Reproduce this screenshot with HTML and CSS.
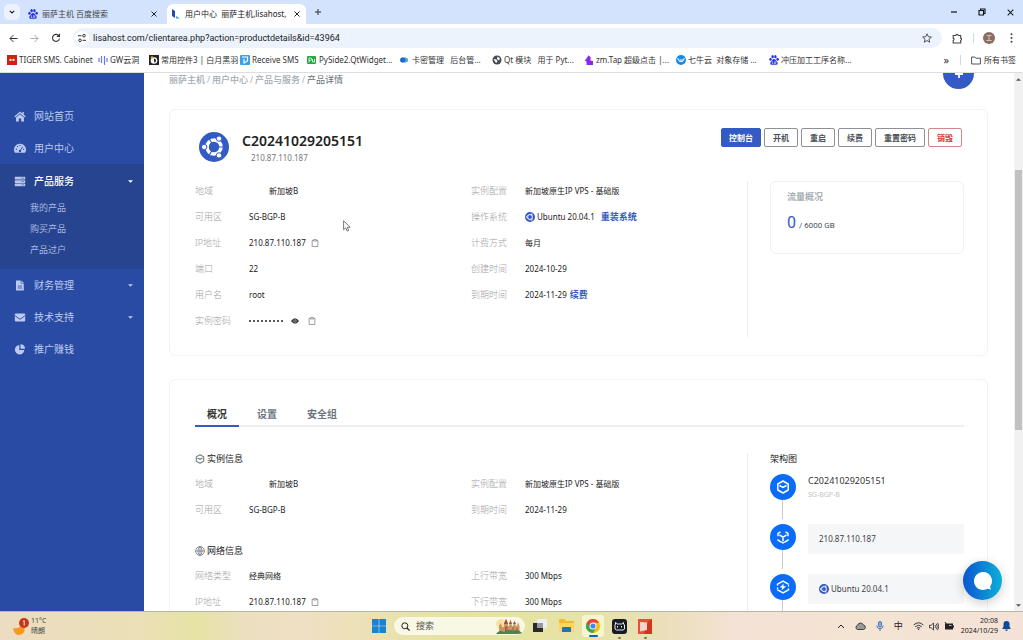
FILE: index.html
```html
<!DOCTYPE html>
<html lang="zh-CN">
<head>
<meta charset="utf-8">
<title>用户中心 - 丽萨主机</title>
<link rel="stylesheet" href="styles.css">
</head>
<body>
<svg class="defs" aria-hidden="true">
  <symbol id="ubuntu" viewBox="0 0 30 30"><circle cx="15" cy="15" r="15" fill="#335bc3"/><circle cx="15" cy="15" r="7" fill="none" stroke="#fff" stroke-width="3.600"/><g stroke="#335bc3" stroke-width="1.200"><path d="M15 15h10M15 15l-5.500-9.500M15 15l-5.500 9.500"/></g><circle cx="15" cy="15" r="5" fill="#335bc3"/><g fill="#fff" stroke="#335bc3" stroke-width="1"><circle cx="5.200" cy="15" r="2.700"/><circle cx="20" cy="6.600" r="2.700"/><circle cx="20" cy="23.400" r="2.700"/></g></symbol>
  <symbol id="copy" viewBox="0 0 8 9"><path d="M2.400 1.500H.8v7h6.400v-7H5.600M2.400.7h3.200v1.600H2.400z" fill="none" stroke="#777" stroke-width=".8"/></symbol>
  <symbol id="paw" viewBox="0 0 10 10"><g fill="#2932e1"><ellipse cx="1.500" cy="4.200" rx="1.200" ry="1.500"/><ellipse cx="3.600" cy="1.700" rx="1.200" ry="1.600"/><ellipse cx="6.400" cy="1.700" rx="1.200" ry="1.600"/><ellipse cx="8.600" cy="4.200" rx="1.200" ry="1.500"/><path d="M5 4.100C3.500 4.100 3.400 5.600 2.200 6.500.6 7.800 1.200 10 3.200 9.800c1.200-.2 2.400-.2 3.600 0C8.800 10 9.400 7.800 7.800 6.500 6.600 5.600 6.500 4.100 5 4.100z"/></g><path d="M3.300 6.300v2.200h1.100M5.600 6.300v2.200h1.200V6.300" stroke="#fff" stroke-width=".6" fill="none"/></symbol>
  <symbol id="x" viewBox="0 0 8 8"><path d="M1.500 1.500l5 5m0-5l-5 5" stroke="#222" fill="none"/></symbol>
  <symbol id="cube" viewBox="0 0 14 14"><path d="M7 1l5.200 3v6L7 13l-5.200-3V4z" fill="none" stroke="currentColor" stroke-width="1.500" stroke-linejoin="round"/><path d="M3.500 5.500L7 7.400l3.500-1.900" fill="none" stroke="currentColor" stroke-width="1.500"/></symbol>
  <symbol id="caret" viewBox="0 0 6 3"><path d="M0 0h6L3 3z" fill="currentColor"/></symbol>
</svg>

<header class="browser">
  <div class="tabstrip">
    <button class="tab-search" aria-label="搜索标签页"><svg width="6" height="4" viewBox="0 0 6 4"><path d="M.8.800L3 3 5.200.8" fill="none" stroke="#222" stroke-width="1.200"/></svg></button>
    <div class="tab">
      <svg width="10" height="10"><use href="#paw"/></svg><span>丽萨主机 百度搜索</span>
      <button aria-label="关闭"><svg width="8" height="8"><use href="#x"/></svg></button>
    </div>
    <div class="tab active">
      <svg width="10" height="10" viewBox="0 0 10 10"><path d="M1 0l3 2v7L1 7z" fill="#254ca8"/><path d="M5 7l4 2.500H5z" fill="#3da0d8"/></svg><span>用户中心 &nbsp;丽萨主机,lisahost,</span>
      <button aria-label="关闭"><svg width="8" height="8"><use href="#x"/></svg></button>
    </div>
    <button class="newtab" aria-label="新标签页"><svg width="8" height="8" viewBox="0 0 8 8"><path d="M4 1v6M1 4h6" stroke="#333" stroke-width="1"/></svg></button>
    <div class="winctl">
      <button aria-label="最小化"><svg width="8" height="8" viewBox="0 0 8 8"><path d="M1 4h6" stroke="#111" stroke-width="1.200"/></svg></button>
      <button aria-label="还原"><svg width="8" height="8" viewBox="0 0 8 8"><path d="M1 2.500h4.500V7H1zM2.500 2.500V1H7v4.500H5.500" fill="none" stroke="#111" stroke-width="1.100"/></svg></button>
      <button aria-label="关闭窗口"><svg width="9" height="9"><use href="#x"/></svg></button>
    </div>
  </div>
  <div class="toolbar">
    <button aria-label="后退"><svg width="9" height="9" viewBox="0 0 9 9"><path d="M8.500 4.500H1M4.500 1L1 4.500 4.500 8" fill="none" stroke="#333"/></svg></button>
    <button aria-label="前进"><svg width="9" height="9" viewBox="0 0 9 9"><path d="M.5 4.500H8M4.500 1L8 4.500 4.500 8" fill="none" stroke="#aaa"/></svg></button>
    <button aria-label="重新加载"><svg width="10" height="10" viewBox="0 0 10 10"><path d="M8 3A3.500 3.500 0 1 0 8.500 5.500M8.500.8v2.700H5.800" fill="none" stroke="#333" stroke-width="1.100"/></svg></button>
    <div class="omnibox">
      <svg width="14" height="14" viewBox="0 0 14 14"><circle cx="7" cy="7" r="7" fill="#fff"/><path d="M3 4.700h3.500M7.500 9.300H11" stroke="#333"/><circle cx="9" cy="4.700" r="1.300" fill="none" stroke="#333"/><circle cx="5" cy="9.300" r="1.300" fill="none" stroke="#333"/></svg>
      <input type="text" aria-label="地址" value="lisahost.com/clientarea.php?action=productdetails&amp;id=43964">
      <button aria-label="收藏"><svg width="10" height="10" viewBox="0 0 10 10"><path d="M5 .8l1.300 2.900 3.100.3L7 6.100l.7 3.100L5 7.500 2.300 9.200 3 6.100.6 4l3.100-.3z" fill="none" stroke="#444" stroke-width=".9"/></svg></button>
    </div>
    <button class="ext" aria-label="扩展程序"><svg width="11" height="11" viewBox="0 0 11 11"><path d="M1.200 2.500h2.600a1.200 1.200 0 0 1 2.400 0h2.500v2.600a1.200 1.200 0 0 1 0 2.300V10H1.200V7.400a1.200 1.200 0 0 0 0-2.300z" fill="none" stroke="#444" stroke-width="1.100"/></svg></button>
    <span class="vr"></span>
    <button class="avatar">工</button>
    <button aria-label="菜单"><svg width="3" height="10" viewBox="0 0 3 10"><g fill="#444"><circle cx="1.500" cy="1.300" r="1"/><circle cx="1.500" cy="5" r="1"/><circle cx="1.500" cy="8.700" r="1"/></g></svg></button>
  </div>
  <nav class="bookmarks">
    <div class="marks">
      <a href="#"><svg width="10" height="10" viewBox="0 0 10 10"><path fill="#cf2310" d="M0 0h10v10H0z"/><path d="M2 5h6M3.500 3.800v2M6.500 3.800v2" stroke="#fff" stroke-width=".9"/></svg>TIGER SMS. Cabinet</a>
      <a href="#"><svg width="10" height="10" viewBox="0 0 10 10"><path d="M1 3v4M3.500 1v7M6.500 1v9M9 3v4" stroke="#6b78e8" stroke-width="1.200"/></svg>GW云洞</a>
      <a href="#"><svg width="10" height="10" viewBox="0 0 10 10"><path fill="#26242b" d="M0 0h10v10H0z"/><circle cx="5" cy="5.500" r="3.300" fill="#fff"/><path d="M5 3.500a2 2 0 0 1 0 4z" fill="#26242b"/><circle cx="3" cy="2.500" r="1.300" fill="#d9a65c"/></svg>常用控件3 | 白月黑羽</a>
      <a href="#"><svg width="10" height="10" viewBox="0 0 10 10"><rect width="10" height="10" rx="1" fill="#3aa0e8"/><path d="M2 2h5.500v4L4 8V4" fill="none" stroke="#fff" stroke-width="1.200"/></svg>Receive SMS</a>
      <a href="#"><svg width="10" height="10" viewBox="0 0 10 10"><rect y="1" width="9" height="8" rx="1" fill="#27a744"/><path d="M2 7.500V3h1.500a1.200 1.200 0 0 1 0 2.400H2M5.500 4v3M7.500 4v3H5.500" stroke="#fff" fill="none" stroke-width=".8"/></svg>PySide2.QtWidget...</a>
      <a href="#"><svg width="10" height="10" viewBox="0 0 10 10"><rect x="0" y="2.500" width="8" height="5" rx="2.500" fill="#3db3c4"/><circle cx="2.800" cy="5" r="2.500" fill="#2a62d4"/></svg>卡密管理 &nbsp; 后台管...</a>
      <a href="#"><svg width="10" height="10" viewBox="0 0 10 10"><circle cx="5" cy="5" r="4.500" fill="#454b50"/><path d="M1.500 4l3 .5 1 2L4 8zM5.500 1.500l2.500 2-1 2-2-1.500z" fill="#fff"/></svg>Qt 模块 &nbsp; 用于 Pyt...</a>
      <a href="#"><svg width="10" height="10" viewBox="0 0 10 10"><path d="M4.500.3l3 3h-1v2.200L9 6v4H2.500V6.500L.8 5.500l1.700-2z" fill="#8a2be2"/></svg>zm.Tap 超级点击 |...</a>
      <a href="#"><svg width="10" height="10" viewBox="0 0 10 10"><circle cx="5" cy="5" r="5" fill="#1789e6"/><path d="M1.500 3l2 3.500h3.200L8.500 3M3.500 5h3.500" stroke="#fff" fill="none"/></svg>七牛云 &nbsp;对象存储 ...</a>
      <a href="#"><svg width="10" height="10"><use href="#paw"/></svg>冲压加工工序名称...</a>
    </div>
    <button class="more" aria-label="更多书签">»</button>
    <span class="vr"></span>
    <a href="#"><svg width="10" height="9" viewBox="0 0 10 9"><path d="M.6 1h3.200l1 1.200h4.600V8H.6z" fill="none" stroke="#444" stroke-width=".9"/></svg>所有书签</a>
  </nav>
</header>

<div class="page">
  <nav class="sidebar">
    <a class="item" href="#"><svg width="12" height="11" viewBox="0 0 12 11"><path d="M6 .5L.3 5.500l.8.9L6 2.200l4.900 4.200.8-.9L9.800 3.800V1H8.300v1.500z M2 6.600L6 3.200l4 3.400V10.500H7.200V7.500H4.800v3H2z" fill="currentColor"/></svg>网站首页</a>
    <a class="item" href="#"><svg width="12" height="11" viewBox="0 0 12 11"><path d="M6 .8a5.700 5.700 0 0 0-5 8.900h10a5.700 5.700 0 0 0-5-8.900z" fill="currentColor"/><g fill="#294ba4"><circle cx="2.300" cy="6.300" r=".7"/><circle cx="3.500" cy="3.600" r=".7"/><circle cx="6" cy="2.600" r=".7"/><circle cx="9.700" cy="6.300" r=".7"/><circle cx="6" cy="8" r="1.200"/></g><path d="M6 8l2.600-4.300" stroke="#294ba4" stroke-width=".9"/></svg>用户中心</a>
    <div class="group">
      <a class="item current" href="#"><svg width="12" height="11" viewBox="0 0 12 11"><g fill="#b7c5ec"><rect x=".8" y=".8" width="10.400" height="2.700" rx=".6"/><rect x=".8" y="4.200" width="10.400" height="2.700" rx=".6"/><rect x=".8" y="7.600" width="10.400" height="2.700" rx=".6"/></g><path d="M7.500 2.100h2.500M7.500 5.500h2.500M7.500 8.900h2.500" stroke="#5a74b8" stroke-width=".8"/></svg>产品服务<svg class="caret" width="5" height="3"><use href="#caret"/></svg></a>
      <a class="sub" href="#">我的产品</a>
      <a class="sub" href="#">购买产品</a>
      <a class="sub" href="#">产品过户</a>
    </div>
    <a class="item" href="#"><svg width="12" height="11" viewBox="0 0 12 11"><path d="M2 .5h4.700v3H9.800v7H2zM7.400.5l2.400 2.400H7.400z" fill="currentColor"/><path d="M3.700 6h4.400M3.700 8h4.400" stroke="#294ba4" stroke-width=".8"/></svg>财务管理<svg class="caret" width="5" height="3"><use href="#caret"/></svg></a>
    <a class="item" href="#"><svg width="12" height="11" viewBox="0 0 12 11"><rect x=".8" y="1.500" width="10.400" height="8" rx="1" fill="currentColor"/><path d="M.8 3.500L5 6.700q1 .7 2 0l4.200-3.200" stroke="#294ba4" stroke-width=".9" fill="none"/></svg>技术支持<svg class="caret" width="5" height="3"><use href="#caret"/></svg></a>
    <a class="item" href="#"><svg width="12" height="11" viewBox="0 0 12 11"><path d="M5.300 1v5h5A4.700 4.700 0 1 1 5.300 1zM6.500.300A4.600 4.600 0 0 1 11 4.800H6.500z" fill="currentColor"/></svg>推广赚钱</a>
  </nav>

  <main class="main">
    <div class="crumbs">
      <a href="#">丽萨主机</a><i>/</i><a href="#">用户中心</a><i>/</i><a href="#">产品与服务</a><i>/</i><span>产品详情</span>
      <button class="add" aria-label="新增"><svg width="10" height="10" viewBox="0 0 10 10"><path d="M5 1v8M1 5h8" stroke="#fff" stroke-width="1.800"/></svg></button>
    </div>

    <section class="card summary">
      <header class="head">
        <svg width="30" height="30"><use href="#ubuntu"/></svg>
        <div class="names"><h1>C20241029205151</h1><p>210.87.110.187</p></div>
        <div class="actions">
          <button class="primary">控制台</button><button>开机</button><button>重启</button><button>续费</button><button>重置密码</button><button class="danger">销毁</button>
        </div>
      </header>
      <div class="cols">
        <dl>
          <dt>地域</dt><dd class="flagged">新加坡B</dd>
          <dt>可用区</dt><dd>SG-BGP-B</dd>
          <dt>IP地址</dt><dd>210.87.110.187<button class="ic" aria-label="复制"><svg width="8" height="8"><use href="#copy"/></svg></button></dd>
          <dt>端口</dt><dd>22</dd>
          <dt>用户名</dt><dd>root</dd>
          <dt>实例密码</dt><dd><span class="dots"><b></b><b></b><b></b><b></b><b></b><b></b><b></b><b></b><b></b></span><button class="ic" aria-label="显示"><svg width="8" height="6" viewBox="0 0 8 6"><path d="M0 3q4-5.500 8 0-4 5.500-8 0z" fill="#333"/><circle cx="4" cy="3" r="1.300" fill="none" stroke="#ccc" stroke-width=".6"/></svg></button><button class="ic" aria-label="复制"><svg width="8" height="8"><use href="#copy"/></svg></button></dd>
        </dl>
        <dl>
          <dt>实例配置</dt><dd>新加坡原生IP VPS - 基础版</dd>
          <dt>操作系统</dt><dd><svg class="os" width="10" height="10"><use href="#ubuntu"/></svg>Ubuntu 20.04.1<a class="link far" href="#">重装系统</a></dd>
          <dt>计费方式</dt><dd>每月</dd>
          <dt>创建时间</dt><dd>2024-10-29</dd>
          <dt>到期时间</dt><dd>2024-11-29<a class="link" href="#">续费</a></dd>
        </dl>
        <aside class="side">
          <div class="traffic"><h2>流量概况</h2><p><strong>0</strong> / 6000 GB</p></div>
        </aside>
      </div>
    </section>

    <section class="card detail">
      <div class="tabs" role="tablist"><button role="tab" aria-selected="true" class="on">概况</button><button role="tab">设置</button><button role="tab">安全组</button></div>
      <div class="cols">
        <div class="infos">
          <h3><svg width="10" height="10"><use href="#cube"/></svg>实例信息</h3>
          <div class="pair">
            <dl><dt>地域</dt><dd class="flagged">新加坡B</dd><dt>可用区</dt><dd>SG-BGP-B</dd></dl>
            <dl><dt>实例配置</dt><dd>新加坡原生IP VPS - 基础版</dd><dt>到期时间</dt><dd>2024-11-29</dd></dl>
          </div>
          <h3><svg width="10" height="10" viewBox="0 0 10 10"><g fill="none" stroke="currentColor" stroke-width=".8"><circle cx="5" cy="5" r="4.400"/><ellipse cx="5" cy="5" rx="2" ry="4.400"/><path d="M5 .6v8.800M.6 5h8.800"/></g></svg>网络信息</h3>
          <div class="pair">
            <dl><dt>网络类型</dt><dd>经典网络</dd><dt>IP地址</dt><dd>210.87.110.187<button class="ic" aria-label="复制"><svg width="8" height="8"><use href="#copy"/></svg></button></dd></dl>
            <dl><dt>上行带宽</dt><dd>300 Mbps</dd><dt>下行带宽</dt><dd>300 Mbps</dd></dl>
          </div>
        </div>
        <aside class="side">
          <h3>架构图</h3>
          <ol class="arch">
            <li><span class="dot"><svg width="14" height="14"><use href="#cube"/></svg></span><div class="node"><strong>C20241029205151</strong><small>SG-BGP-B</small></div></li>
            <li><span class="dot"><svg width="14" height="14" viewBox="0 0 14 14"><path d="M4.500 1.800L2 3.300v3M9.500 1.800L12 3.300v3M2 9.200v1L5 12M12 9.200v1L9 12M3.500 5L7 7.200 10.500 5M7 7.200V11M5.300 11.800L7 12.800l1.700-1" fill="none" stroke="#fff" stroke-width="1.500"/></svg></span><div class="box">210.87.110.187</div></li>
            <li><span class="dot"><svg width="14" height="14" viewBox="0 0 14 14"><path d="M1.500 5.500V4.200L7 1l5.500 3.200M1.500 9.800L7 13l5.500-3.200V8.500" fill="none" stroke="#fff" stroke-width="1.500"/><path d="M7.600 3.500L3.800 7.600h2.400L5.500 10.500l4.600-4.300H7.500z" fill="#fff"/><path d="M1.500 7.500v2M12.500 4.500v2" stroke="#fff" stroke-width="1.300"/></svg></span><div class="box"><svg class="os" width="10" height="10"><use href="#ubuntu"/></svg>Ubuntu 20.04.1</div></li>
          </ol>
        </aside>
      </div>
    </section>
  </main>

  <div class="scrollbar"><svg width="5" height="3" viewBox="0 0 6 3"><path d="M0 3h6L3 0z" fill="#555"/></svg><span class="track"><b></b></span><svg width="5" height="3" color="#555"><use href="#caret"/></svg></div>
  <button class="chat" aria-label="在线客服"><svg width="18" height="18" viewBox="0 0 18 18"><path d="M9 0a9 9 0 1 0 4.500 16.800L17 17.500l-.9-3A9 9 0 0 0 9 0z" fill="#fff"/></svg></button>
  <svg class="pointer" width="8" height="12" viewBox="0 0 8 12"><path d="M.6.8v9l2.200-2 1.400 3.300 1.500-.7-1.400-3.100h2.900z" fill="#fff" stroke="#555" stroke-width=".8"/></svg>
</div>

<footer class="taskbar">
  <div class="weather">
    <svg width="17" height="19" viewBox="0 0 17 19"><path d="M1 11q6 1.500 11-5 3 12-6 12-4-1-5-7z" fill="#f7991f"/><circle cx="12" cy="6" r="5" fill="#c5361f"/><path d="M11.200 4.300l1-.6v4.800" stroke="#fff" fill="none" stroke-width=".9"/></svg>
    <p>11°C<br>晴朗</p>
  </div>
  <div class="apps">
    <button aria-label="开始"><svg width="14" height="14" viewBox="0 0 14 14"><path d="M0 0h6.700v6.700H0zM7.300 0H14v6.700H7.300zM0 7.300h6.700V14H0zM7.300 7.300H14V14H7.300z" fill="#1583d8"/></svg></button>
    <label class="search"><svg width="9" height="9" viewBox="0 0 9 9"><circle cx="3.800" cy="3.800" r="3" fill="none" stroke="#222"/><path d="M6 6l2.600 2.600" stroke="#222" stroke-width="1.200"/></svg><input type="text" aria-label="搜索" placeholder="搜索"><svg width="26" height="16" viewBox="0 0 26 16"><circle cx="5" cy="6" r="5" fill="#fbe3a6"/><path d="M3 14V8l1.500-3L6 8v1h2V5l2-4 2 4v3h1l1.500-6L16 8h1l1.500-5L20 8h1l1-4 1.500 4v6z" fill="#cf9460"/><path d="M8 6l2-5 2 5zM13 6l1.500-4L16 6zM17 6l1.500-3L20 6z" fill="#a8493a"/><path d="M9.500 13V9h1.500v4M17 13V9M21 13V10" stroke="#8c4b35" fill="none" stroke-width=".8"/><path d="M0 16q3-5 8-2 5-4 9-1 5-3 9 2-2 1-5 1z" fill="#4f8250"/></svg></label>
    <button aria-label="任务视图"><svg width="14" height="14" viewBox="0 0 14 14"><path d="M4 0h10v9H4z" fill="#eeeef0"/><path d="M0 4h10v9H0z" fill="#27292c"/><path d="M4 4h6v5H4z" fill="#999"/></svg></button>
    <button aria-label="文件"><svg width="16" height="14" viewBox="0 0 16 14"><path d="M0 1q0-1 1-1h4l2 2h7q1 0 1 1v9q0 1-1 1H1q-1 0-1-1z" fill="#f5b82e"/><path d="M0 4h15v8q0 1-1 1H1q-1 0-1-1z" fill="#ffd75e"/><path d="M3 9q0-1 1-1h7q1 0 1 1v4H3z" fill="#1676c4"/></svg></button>
    <button class="running" aria-label="Chrome"><svg width="14" height="14" viewBox="0 0 14 14"><circle cx="7" cy="7" r="7" fill="#fbbc05"/><path d="M7 7L.9 3.500A7 7 0 0 0 7 14l3-5z" fill="#34a853"/><path d="M7 3.800H13.100A7 7 0 0 0 .9 3.500L4 8z" fill="#ea4335"/><circle cx="7" cy="7" r="3.500" fill="#fff"/><circle cx="7" cy="7" r="2.600" fill="#4285f4"/></svg></button>
    <button class="open" aria-label="终端"><svg width="15" height="15" viewBox="0 0 15 15"><rect width="15" height="15" rx="3" fill="#171b25"/><path d="M3.500 5V3.500L5.500 5h4l2-1.500V5l1 1v4L11 11H4.500L3 10V6z" fill="none" stroke="#fff" stroke-width=".9"/><path d="M5.500 7v1.500M9.500 7v1.500" stroke="#fff"/></svg></button>
    <button class="open" aria-label="编辑器"><svg width="15" height="15" viewBox="0 0 15 15"><path d="M0 0h14v15H0z" fill="#ef4b3a"/><path d="M10 3l4-3v15H6z" fill="#d5321f"/><path d="M2 3l7 .5V11L2 12.500z" fill="#f5d5cb"/></svg></button>
  </div>
  <div class="tray">
    <button aria-label="展开"><svg width="8" height="5" viewBox="0 0 8 5"><path d="M1 4l3-3 3 3" fill="none" stroke="#222"/></svg></button>
    <svg width="11" height="8" viewBox="0 0 11 8"><path d="M2.500 7.500a2.200 2.200 0 0 1 0-4.200 3.200 3.200 0 0 1 6-.3 2.300 2.300 0 0 1 0 4.500z" fill="#999" stroke="#222" stroke-width=".8"/></svg>
    <svg width="8" height="10" viewBox="0 0 8 10"><rect x="2.500" y=".5" width="3" height="5.500" rx="1.500" fill="#8eb4e6" stroke="#245ba8" stroke-width=".8"/><path d="M.8 4.500q0 3.200 3.200 3.200t3.200-3.200M4 7.700V10" fill="none" stroke="#245ba8" stroke-width=".8"/></svg>
    <span>中</span>
    <svg class="wifi" width="11" height="8" viewBox="0 0 11 8"><path d="M.7 3q4.800-4.500 9.600 0M2.300 4.700q3.200-3 6.400 0M3.900 6.200q1.600-1.400 3.200 0" fill="none" stroke="#222" stroke-width=".9"/><circle cx="5.500" cy="7.300" r=".7" fill="#222"/></svg>
    <svg width="10" height="9" viewBox="0 0 10 9"><path d="M.5 3.200h1.700L4.500 1v7L2.200 5.800H.5zM6 3q1.200 1.500 0 3M7.300 1.800q2.200 2.700 0 5.400M8.600.8q2.600 3.700 0 7.400" fill="none" stroke="#222" stroke-width=".8"/></svg>
    <svg width="10" height="8" viewBox="0 0 10 8"><path d="M1 1.500h8v6H1zM9 3.500h1v2H9z" fill="#222"/><path d="M1 0l2 3" stroke="#222"/><path d="M5 3.500h2.500" stroke="#ddd" stroke-width=".8"/></svg>
    <p class="clock">20:08<br>2024/10/29</p>
    <svg width="9" height="10" viewBox="0 0 9 10"><path d="M4.500 0a3 3 0 0 1 3 3v2.500L8.800 8H.2l1.300-2.500V3a3 3 0 0 1 3-3zM3.200 8.500h2.600q-.3 1.500-1.300 1.500t-1.300-1.500z" fill="#0b4a9c"/></svg>
  </div>
</footer>
</body>
</html>
```

FILE: styles.css
```css
* { box-sizing: border-box; }
body {
  margin: 0; height: 100vh; display: flex; flex-direction: column; overflow: hidden;
  font: 8px/12px "Noto Sans", "Noto Sans CJK SC", sans-serif; color: #222; background: #fff;
}
h1, h2, h3, p, dl, dd, ol { margin: 0; padding: 0; }
button, input { font: inherit; color: inherit; border: 0; background: none; padding: 0; margin: 0; outline: 0; }
button { display: flex; align-items: center; justify-content: center; flex: none; }
a { color: inherit; text-decoration: none; }
svg { flex: none; display: block; }
.defs { position: absolute; width: 0; height: 0; }

.browser { flex: none; border-bottom: 1px solid #dcdee1; }
.tabstrip { display: flex; align-items: center; height: 24px; background: #d3e3fd; padding-left: 4px; }
.tab-search { width: 16px; height: 16px; border-radius: 5px; background: #ebf2fe; }
.tab { display: flex; align-items: center; gap: 4px; width: 139px; height: 20px; padding: 0 5px 0 4px; margin-left: 4px; align-self: flex-end; }
.tab span { flex: 1; white-space: nowrap; color: #444; }
.tab.active { background: #fff; border-radius: 6px 6px 0 0; }
.tab.active span { color: #222; }
.newtab { margin-left: 8px; }
.winctl { display: flex; gap: 20px; margin-left: auto; padding-right: 8px; }

.toolbar { display: flex; align-items: center; height: 28px; padding: 0 10px 0 9px; }
.toolbar > button + button { margin-left: 12px; }
.omnibox { flex: 1; display: flex; align-items: center; height: 20px; margin: 0 10px 0 12px; padding: 0 10px 0 2px; border-radius: 10px; background: #ecf3fc; }
.omnibox input { flex: 1; font-family: Roboto, sans-serif; font-size: 9px; margin-left: 4px; height: 14px; }
.vr { width: 1px; height: 10px; background: #c3d9f7; }
.ext { margin-right: 10px; }
.avatar { width: 12px; height: 12px; margin: 0 15px 0 9px; border-radius: 50%; background: #8b6c61; color: #fff; font-size: 6px; }
.toolbar > .avatar + button { margin-left: 0; }

.bookmarks { display: flex; align-items: center; height: 20px; padding: 0 7px 4px; color: #333; }
.marks { flex: 1; display: grid; grid-template-columns: 91px 51px 91px 67px 93px 92px 92px 92px 93px 1fr; }
.bookmarks a { display: flex; align-items: center; gap: 3px; white-space: nowrap; }
.marks a { gap: 2px; }
.more { font-size: 11px; margin-right: 11px; }
.bookmarks .vr { margin-right: 10px; }

.page { flex: 1; min-height: 0; display: flex; position: relative; overflow: hidden; }
.sidebar { width: 144px; flex: none; background: #294ba4; padding-top: 27px; color: #bccaf0; }
.item { display: flex; align-items: center; gap: 8px; height: 32px; padding: 0 11px 0 14px; font-size: 10px; }
.item .caret { margin-left: auto; }
.group { background: #26448f; padding: 1px 0 9px; }
.current { color: #fff; font-weight: 500; }
.sub { display: flex; align-items: center; height: 21px; padding-left: 30px; font-size: 9px; color: #a9b8e0; }

.main { flex: 1; min-width: 0; padding: 0 26px 0 25px; }
.crumbs { position: relative; display: flex; gap: 2px; height: 36px; line-height: 13px; font-size: 9px; color: #666e76; }
.crumbs a { font-weight: 500; color: #a3aab1; }
.crumbs i { font-style: normal; color: #aaa; font-size: 8px; }
.add { position: absolute; right: 14px; top: -15px; width: 31px; height: 31px; border-radius: 50%; background: #335bc3; }

.card { border: 1px solid #f3f3f3; border-radius: 6px; padding: 0 23px 0 25px; }
.summary { padding-top: 18px; padding-bottom: 18px; margin-bottom: 23px; }
.head { display: flex; align-items: flex-start; height: 53px; padding: 0 2px 0 4px; }
.head > svg { margin-top: 4px; }
.names { flex: 1; margin-left: 13px; }
h1 { font-size: 14px; line-height: 26px; font-weight: 600; }
.names p { padding-left: 9px; line-height: 8px; color: #777; }
.actions { display: flex; gap: 3px; }
.actions button { height: 19px; padding: 0 8px; border: 1px solid #8b9197; border-radius: 2px; font-weight: 700; color: #495057; }
.actions .primary { background: #335bc3; border-color: #335bc3; color: #fff; padding: 0 7px; }
.actions .danger { color: #e02f2f; border-color: #cf8a8a; }

.cols { display: grid; grid-template-columns: 1fr 1fr 217px; }
dl { display: grid; grid-template-columns: 54px 1fr; grid-auto-rows: 26px; align-content: start; line-height: 20px; }
dt { font-size: 9px; color: #a2a2a2; font-weight: 300; }
dd { display: flex; align-items: center; height: 20px; color: #222; white-space: nowrap; }
.flagged { padding-left: 20px; }
.ic { margin-left: 5px; }
.dots { display: flex; gap: 2px; margin-right: 3px; }
.dots b { width: 2px; height: 2px; background: #222; border-radius: 50%; }
.ic + .ic { margin-left: 9px; }
.os { margin-right: 2px; }
.link { color: #335bc3; font-weight: 700; margin-left: 3px; font-size: 9px; }
.far { margin-left: 6px; }
.side { border-left: 1px solid #ececec; padding-left: 22px; }
.traffic { height: 73px; border: 1px solid #f1f1f1; border-radius: 6px; padding: 8px 16px; }
h2 { font-size: 9px; line-height: 14px; font-weight: 700; color: #a9b0b7; }
.traffic p { font-family: Roboto, sans-serif; line-height: 26px; margin-top: 6px; color: #495057; }
.traffic strong { font-size: 16px; font-weight: 400; color: #335bc3; margin-right: 1px; }

.detail { height: 400px; padding-top: 23px; }
.tabs { display: flex; gap: 6px; border-bottom: 2px solid #efefef; }
.tabs button { height: 24px; padding: 0 12px; margin-bottom: -2px; font-size: 10px; font-weight: 700; color: #6c757d; border-bottom: 2px solid transparent; }
.tabs .on { color: #333; border-color: #335bc3; }
.detail .cols { grid-template-columns: 1fr 217px; margin-top: 26px; }
.pair { display: grid; grid-template-columns: 1fr 1fr; margin-bottom: 19px; }
h3 { display: flex; align-items: center; gap: 2px; height: 12px; margin-bottom: 9px; font-size: 9px; font-weight: 400; color: #222; }
h3 svg { color: #6c757d; }
.arch { list-style: none; }
.arch li { display: flex; gap: 12px; height: 50px; position: relative; }
.arch li::after { content: ""; position: absolute; left: 12px; top: 26px; width: 1px; height: 19px; background: #ccc; }
.dot { width: 26px; height: 26px; border-radius: 50%; background: #0a6cf8; color: #fff; display: grid; place-items: center; }
.node strong, .node small { display: block; }
.node strong { font-size: 9px; font-weight: 400; line-height: 14px; color: #333; }
.node small { font-size: 7px; line-height: 14px; color: #c4c4c4; }
.box { flex: 1; display: flex; align-items: center; height: 30px; padding-left: 11px; background: #f5f6f8; border-radius: 2px; color: #444; }

.scrollbar { width: 9px; flex: none; background: #f1f1f1; display: flex; flex-direction: column; align-items: center; padding: 5px 0 4px; }
.track { flex: 1; display: flex; flex-direction: column; width: 100%; padding: 89px 1px 0; }
.track b { height: 60%; background: #c1c1c1; }
.chat { position: absolute; right: 21px; bottom: 11px; width: 39px; height: 39px; border-radius: 50%; background: linear-gradient(90deg, #0b55d0, #0db0d8); box-shadow: 0 3px 12px #0003; }
.pointer { position: absolute; left: 343px; top: 147px; }

.taskbar { flex: none; height: 29px; display: grid; grid-template-columns: 1fr auto 1fr; align-items: center; border-top: 1px solid #b9b5a4; background: linear-gradient(90deg, #ecdcc2 0, #ebe0b6 14%, #e6e3a5 19%, #ecdfc0 24%, #f0dfc4 30%, #e5e49f 45%, #e6e3a6 57%, #ebdfba 65%, #f4e2d6 72%, #f4e4d2 84%, #f4e2d8 100%); line-height: 10px; }
.weather { display: flex; align-items: center; gap: 2px; padding-left: 12px; }
.weather p { color: #444; font-size: 7px; }
.apps { display: flex; align-items: center; height: 28px; margin-left: 2px; }
.search { display: flex; align-items: center; width: 131px; height: 18px; margin: 0 8px; padding: 0 3px 0 7px; border-radius: 9px; background: #f9f8e4; }
.search input { flex: 1; min-width: 0; margin-left: 6px; font-size: 9px; }
.search input::placeholder { color: #555; opacity: 1; }
.search + button { margin-right: 12px; }
.running { width: 22px; height: 22px; margin: 0 8px 0 7px; border-radius: 3px; background: #f7f5cf; position: relative; }
.open { position: relative; }
.open + .open { margin-left: 11px; }
.running::after, .open::after { content: ""; position: absolute; bottom: 0; width: 9px; height: 2px; border-radius: 1px; background: #0f63b5; }
.open::after { bottom: -5px; width: 3px; background: #7a785e; }
.tray { display: flex; align-items: center; justify-content: flex-end; gap: 10px; padding-right: 12px; font-size: 9px; }
.tray .wifi ~ svg { margin-left: -5px; }
.clock { text-align: right; font-size: 7px; margin-left: -3px; }
.tray .clock + svg { margin-left: -6px; }
```
